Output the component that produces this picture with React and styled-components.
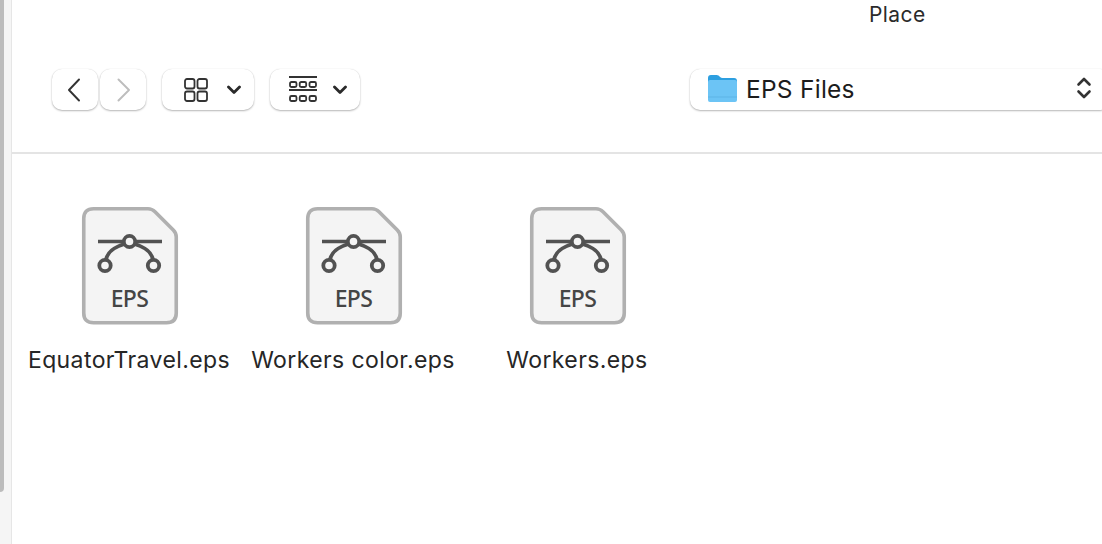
import React from 'react';
import styled, {createGlobalStyle} from 'styled-components';

const GlobalStyle = createGlobalStyle`
  html, body {
    margin: 0;
    padding: 0;
    background: #fff;
  }

  body {
    font-family: Inter, "Liberation Sans", sans-serif;
    color: #242424;
  }
`;

const files = ['EquatorTravel.eps', 'Workers color.eps', 'Workers.eps'];

const EpsIcon = () => (
    <svg width="98" height="119" viewBox="0 0 98 119" fill="none">
        <path d="M12.500 2.750H67Q71 2.750 74 5.750L92.250 24Q95.250 27 95.250 31V107Q95.250 116.750 85.500 116.750H12.500Q2.750 116.750 2.750 107V12.500Q2.750 2.750 12.500 2.750Z"
              fill="#f4f4f4" stroke="#b0b0b0" strokeWidth="3.600"/>
        <path d="M17 35.500H81" stroke="#525252" strokeWidth="3.600"/>
        <path d="M43.500 38C33 41 26 47 25 54M53.500 38C64 41 71 47 72 54" stroke="#525252" strokeWidth="3.800"/>
        <circle cx="48.500" cy="35.500" r="5.600" fill="#f4f4f4" stroke="#525252" strokeWidth="3.600"/>
        <circle cx="24" cy="59.500" r="5.700" fill="#f4f4f4" stroke="#525252" strokeWidth="3.800"/>
        <circle cx="72.500" cy="59.500" r="5.700" fill="#f4f4f4" stroke="#525252" strokeWidth="3.800"/>
    </svg>
);

const GridIcon = () => (
    <svg width="24" height="24" viewBox="0 0 24 24" fill="none" stroke="#333" strokeWidth="1.800">
        <rect x="1" y="1" width="9.500" height="9.500" rx="2"/>
        <rect x="13.500" y="1" width="9.500" height="9.500" rx="2"/>
        <rect x="1" y="13.500" width="9.500" height="9.500" rx="2"/>
        <rect x="13.500" y="13.500" width="9.500" height="9.500" rx="2"/>
    </svg>
);

const GroupIcon = () => (
    <svg width="28" height="27" viewBox="0 0 28 27" fill="none" stroke="#333" strokeWidth="1.800">
        <path d="M0 1H28M0 14H28"/>
        <rect x="1" y="6" width="6.500" height="5" rx="1.500"/>
        <rect x="10.700" y="6" width="6.500" height="5" rx="1.500"/>
        <rect x="20.500" y="6" width="6.500" height="5" rx="1.500"/>
        <rect x="1" y="20" width="6.500" height="5" rx="1.500"/>
        <rect x="10.700" y="20" width="6.500" height="5" rx="1.500"/>
        <rect x="20.500" y="20" width="6.500" height="5" rx="1.500"/>
    </svg>
);

const Chevron = () => (
    <svg width="14" height="10" viewBox="0 0 14 10" fill="none" stroke="#2a2a2a" strokeWidth="2.800"
         strokeLinecap="round" strokeLinejoin="round">
        <path d="M1.500 2L7 7.500L12.500 2"/>
    </svg>
);

const NavArrow = ({flip, color}) => (
    <svg width="14" height="24" viewBox="0 0 14 24" fill="none" stroke={color} strokeWidth="1.900"
         strokeLinecap="round" strokeLinejoin="round">
        <path d={flip ? 'M2.500 1.500L13 12L2.500 22.500' : 'M11 1.500L1 12L11 22.500'}/>
    </svg>
);

const FolderIcon = () => (
    <svg width="29" height="28" viewBox="0 0 30 28" preserveAspectRatio="none">
        <path d="M0 3Q0 0 3 0H9Q11 0 12.500 2Q13.500 3 15 3H27Q30 3 30 6V10H0Z" fill="#2d9fe0"/>
        <path d="M0 7Q0 5 2 5H28Q30 5 30 7V25Q30 27 28 27H2Q0 27 0 25Z" fill="#6cc4f5"/>
        <path d="M0 22H30" stroke="#5cb4e6" strokeWidth="1"/>
    </svg>
);

const UpDown = () => (
    <svg width="16" height="24" viewBox="0 0 16 24" fill="none" stroke="#333" strokeWidth="2.600"
         strokeLinecap="round" strokeLinejoin="round">
        <path d="M2.500 8.500L8 3L13.500 8.500M2.500 15.500L8 21L13.500 15.500"/>
    </svg>
);

const App = () => {
    return (
        <>
            <GlobalStyle/>
            <Window>
                <Rail>
                    <Thumb/>
                </Rail>
                <Main>
                    <Header>
                        <Title>Place</Title>
                        <Toolbar>
                            <NavGroup>
                                <NavButton><NavArrow color="#333"/></NavButton>
                                <NavButton><NavArrow flip color="#bdbdbd"/></NavButton>
                            </NavGroup>
                            <MenuButton $width={92} $pad={22} $gap={19}>
                                <GridIcon/>
                                <Chevron/>
                            </MenuButton>
                            <MenuButton $width={90} $pad={19} $gap={16}>
                                <GroupIcon/>
                                <Chevron/>
                            </MenuButton>
                            <PathSelect>
                                <FolderIcon/>
                                <PathName>EPS Files</PathName>
                                <Stepper>
                                    <UpDown/>
                                </Stepper>
                            </PathSelect>
                        </Toolbar>
                    </Header>
                    <FileGrid>
                        {files.map((name) => (
                            <FileItem key={name}>
                                <IconBox>
                                    <EpsIcon/>
                                    <IconLabel>EPS</IconLabel>
                                </IconBox>
                                <FileName>{name}</FileName>
                            </FileItem>
                        ))}
                    </FileGrid>
                </Main>
            </Window>
        </>
    )
}

const Window = styled.div`
  display: flex;
  width: 1102px;
  height: 544px;
  overflow: hidden;
  background: #fff;
`;

const Rail = styled.div`
  flex: none;
  width: 11px;
  height: 100%;
  background: #f5f5f5;
  border-right: 1px solid #e6e6e6;
`;

const Thumb = styled.div`
  width: 4px;
  height: 492px;
  background: #bcbcbc;
  border-radius: 0 0 4px 0;
`;

const Main = styled.div`
  flex: 1;
  min-width: 0;
`;

const Header = styled.header`
  height: 152px;
  border-bottom: 2px solid #e4e4e4;
`;

const Title = styled.div`
  height: 69px;
  padding: 3px 0 0 857px;
  box-sizing: border-box;
  font-size: 21px;
  letter-spacing: 0.4px;
  line-height: 24px;
  color: #2b2b2b;
`;

const Toolbar = styled.div`
  display: flex;
  align-items: center;
  height: 41px;
  padding-left: 40px;
`;

const NavGroup = styled.div`
  display: flex;
  flex: none;
  gap: 2px;
  margin-right: 16px;
`;

const ControlBase = styled.div`
  display: flex;
  flex: none;
  align-items: center;
  box-sizing: border-box;
  height: 41px;
  background: #fff;
  border-radius: 10px;
  box-shadow: 0 1px 2px rgba(0, 0, 0, 0.28), 0 0 1px rgba(0, 0, 0, 0.14);
`;

const NavButton = styled(ControlBase)`
  justify-content: center;
  width: 46px;
`;

const MenuButton = styled(ControlBase)`
  gap: ${(props) => props.$gap}px;
  width: ${(props) => props.$width}px;
  margin-right: 16px;
  padding-left: ${(props) => props.$pad}px;
`;

const PathSelect = styled(ControlBase)`
  width: 420px;
  margin-left: 314px;
  padding: 0 18px 2px 18px;
`;

const PathName = styled.span`
  flex: 1;
  margin-left: 9px;
  font-size: 24.500px;
  letter-spacing: 0.25px;
  line-height: 30px;
  color: #1c1c1c;
`;

const Stepper = styled.span`
  display: flex;
  margin-bottom: 2px;
`;

const FileGrid = styled.div`
  display: grid;
  grid-template-columns: repeat(auto-fill, 224px);
  padding: 52px 0 0 5px;
`;

const FileItem = styled.div`
  display: flex;
  flex-direction: column;
  align-items: center;
`;

const IconBox = styled.div`
  position: relative;
  width: 98px;
  height: 119px;
  margin-left: 2px;
`;

const IconLabel = styled.span`
  position: absolute;
  left: -1px;
  right: 0;
  top: 78px;
  text-align: center;
  font-family: "Noto Sans", sans-serif;
  font-size: 23px;
  font-weight: 500;
  letter-spacing: -0.6px;
  line-height: 28px;
  color: #454545;
`;

const FileName = styled.div`
  margin-top: 21px;
  font-size: 23px;
  letter-spacing: 0.4px;
  line-height: 28px;
  white-space: nowrap;
  color: #262626;
`;

export default App;
